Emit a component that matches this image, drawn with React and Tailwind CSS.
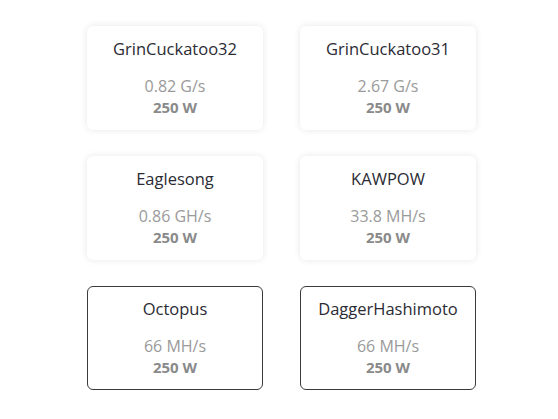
import React from 'react';

const algos = [
  { name: 'GrinCuckatoo32', rate: '0.82 G/s', power: '250 W' },
  { name: 'GrinCuckatoo31', rate: '2.67 G/s', power: '250 W' },
  { name: 'Eaglesong', rate: '0.86 GH/s', power: '250 W' },
  { name: 'KAWPOW', rate: '33.8 MH/s', power: '250 W' },
  { name: 'Octopus', rate: '66 MH/s', power: '250 W', selected: true },
  { name: 'DaggerHashimoto', rate: '66 MH/s', power: '250 W', selected: true },
];

const AlgoCard = ({ algo }) => (
  <div
    className={
      algo.selected
        ? 'h-[104px] rounded-md border border-[#3a3a3a] bg-white flex flex-col items-center pt-[11px]'
        : 'h-[104px] rounded-md border border-transparent bg-white shadow-[0_0_7px_rgba(0,0,0,0.1)] flex flex-col items-center pt-[11px]'
    }
  >
    <div className="text-[16.5px] leading-[22px] text-[#2b2b33]">{algo.name}</div>
    <div className="mt-[16px] text-[16px] leading-[20px] text-[#9a9a9a]">{algo.rate}</div>
    <div className="mt-[1px] text-[15px] leading-[20px] font-bold text-[#8a8a8a]">{algo.power}</div>
  </div>
);

export default function App() {
  return (
    <div
      className="w-[558px] h-[419px] bg-white pt-[26px] pl-[87px]"
      style={{ fontFamily: '"Open Sans", "Noto Sans", sans-serif' }}
    >
      <div className="grid grid-cols-[176px_176px] gap-x-[37px] gap-y-[26px]">
        {algos.map(a => (
          <AlgoCard key={a.name} algo={a} />
        ))}
      </div>
    </div>
  );
}
